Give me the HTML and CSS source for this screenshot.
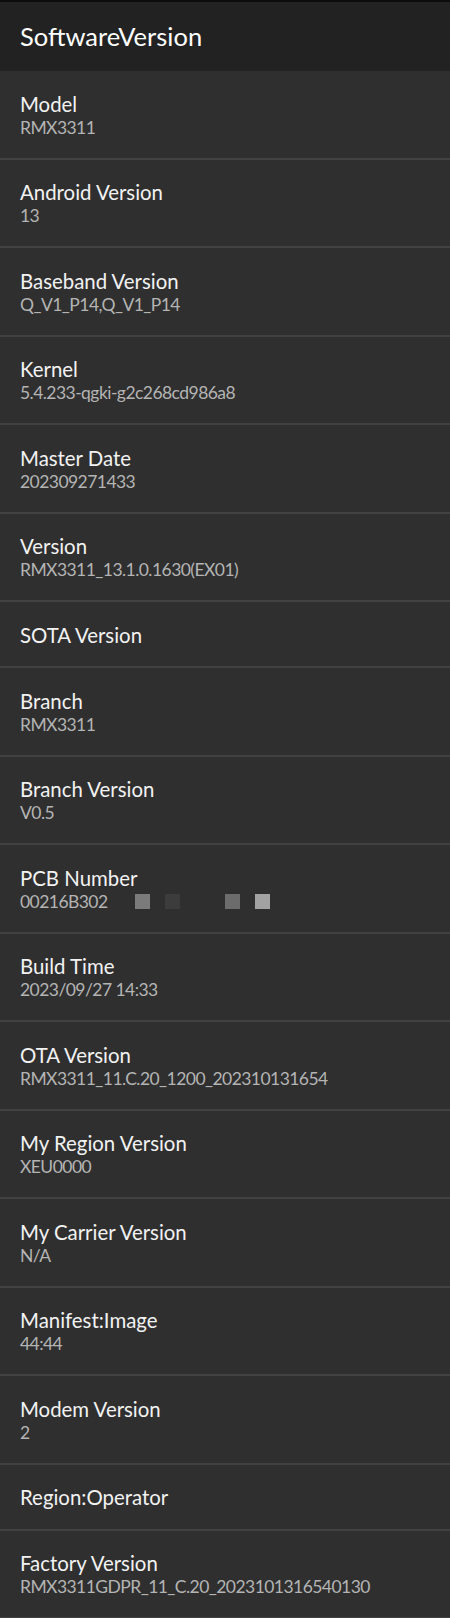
FILE: index.html
```html
<!DOCTYPE html>
<html lang="en">
<head>
<meta charset="utf-8">
<title>SoftwareVersion</title>
<link rel="stylesheet" href="styles.css">
</head>
<body>
<div class="page">
  <header class="topbar"><h1 class="title">SoftwareVersion</h1></header>
  <ul class="list">
    <li class="row"><div class="label">Model</div><div class="value">RMX3311</div></li>
    <li class="row"><div class="label">Android Version</div><div class="value">13</div></li>
    <li class="row"><div class="label">Baseband Version</div><div class="value">Q_V1_P14,Q_V1_P14</div></li>
    <li class="row"><div class="label">Kernel</div><div class="value">5.4.233-qgki-g2c268cd986a8</div></li>
    <li class="row"><div class="label">Master Date</div><div class="value">202309271433</div></li>
    <li class="row"><div class="label">Version</div><div class="value">RMX3311_13.1.0.1630(EX01)</div></li>
    <li class="row single"><div class="label">SOTA Version</div></li>
    <li class="row"><div class="label">Branch</div><div class="value">RMX3311</div></li>
    <li class="row"><div class="label">Branch Version</div><div class="value">V0.5</div></li>
    <li class="row"><div class="label">PCB Number</div><div class="value redacted-line"><span>00216B302</span><span class="mask"><i class="sq sq1"></i><i class="sq sq2"></i><i class="sq sq3"></i><i class="sq sq4"></i></span></div></li>
    <li class="row"><div class="label">Build Time</div><div class="value">2023/09/27 14:33</div></li>
    <li class="row"><div class="label">OTA Version</div><div class="value">RMX3311_11.C.20_1200_202310131654</div></li>
    <li class="row"><div class="label">My Region Version</div><div class="value">XEU0000</div></li>
    <li class="row"><div class="label">My Carrier Version</div><div class="value">N/A</div></li>
    <li class="row"><div class="label">Manifest:Image</div><div class="value">44:44</div></li>
    <li class="row"><div class="label">Modem Version</div><div class="value">2</div></li>
    <li class="row single"><div class="label">Region:Operator</div></li>
    <li class="row last"><div class="label">Factory Version</div><div class="value">RMX3311GDPR_11_C.20_2023101316540130</div></li>
  </ul>
</div>
</body>
</html>
```
FILE: styles.css
```css
* { box-sizing: border-box; }
html, body {
  margin: 0;
  padding: 0;
  background: #2f2f2f;
}
body {
  font-family: Lato, "Open Sans", "Noto Sans", sans-serif;
  -webkit-font-smoothing: antialiased;
}
.page {
  width: 450px;
  height: 1618px;
  overflow: hidden;
  background: #2f2f2f;
}
.topbar {
  border-top: 2px solid #0c0c0c;
  background: #222222;
  height: 71px;
  padding: 0 20px;
}
.title {
  margin: 0;
  font-weight: 400;
  font-size: 25.5px;
  line-height: 69px;
  color: #ffffff;
}
.list {
  list-style: none;
  margin: 0;
  padding: 0;
}
.row {
  padding: 21.5px 20px 18px;
  border-bottom: 2px solid #414141;
}
.row.single {
  padding: 21.5px 20px 19.5px;
}
.label {
  font-size: 20.4px;
  line-height: 23px;
  color: #f2f2f2;
}
.value {
  font-size: 17.5px;
  letter-spacing: -0.55px;
  line-height: 24px;
  color: #b4b4b4;
}
.redacted-line {
  display: flex;
  align-items: center;
}
.mask {
  display: flex;
  align-items: center;
  margin-left: 27px;
}
.sq {
  display: block;
  width: 15px;
  height: 15px;
}
.sq1 { background: #7b7b7b; }
.sq2 { background: #3c3c3c; margin-left: 15px; }
.sq3 { background: #6c6c6c; margin-left: 45px; }
.sq4 { background: #a2a2a2; margin-left: 15px; }
```
